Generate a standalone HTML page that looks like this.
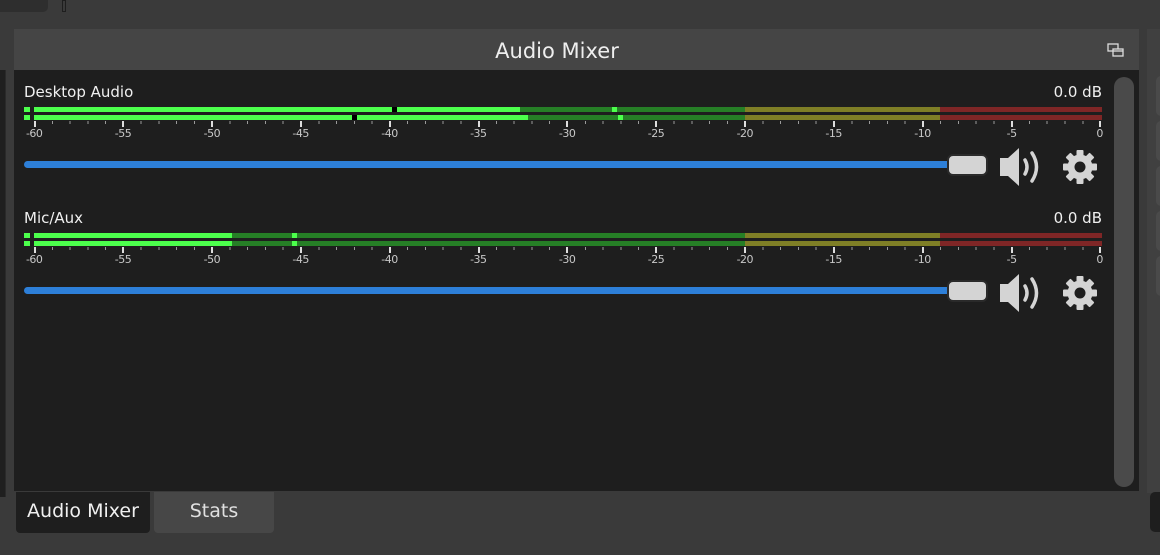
<!DOCTYPE html>
<html><head><meta charset="utf-8"><style>
*{margin:0;padding:0;box-sizing:border-box}
body{width:1160px;height:555px;overflow:hidden;background:#3a3a3a;position:relative;font-family:"DejaVu Sans","Liberation Sans",sans-serif;color:#eee}
.a{position:absolute}
.lbl{font-size:15px;color:#f0f0f0}
.db{font-size:15px;color:#f0f0f0;right:58px}
.bar{position:absolute;height:5px}
.tk{position:absolute;height:3px;left:34px;width:1068px;background:repeating-linear-gradient(to right,#9a9a9a 0 1px,transparent 1px 17.767px)}
.mj{position:absolute;width:2px;height:6px;background:#ddd}
.n{position:absolute;font-size:11px;color:#c8c8c8;transform:translateX(-55%);letter-spacing:-0.5px}
</style></head><body>
<div class="a" style="left:0;top:0;width:48px;height:12px;background:#2e2e2e;border-radius:0 0 5px 0"></div>
<div class="a" style="left:62px;top:0;width:4px;height:12px;border:1px solid #1e1e1e"></div>
<div class="a" style="left:0;top:70px;width:6px;height:427px;background:#1f1f1f;border-right:1px solid #2a2a2a"></div>
<div class="a" style="left:14px;top:29px;width:1125px;height:41px;background:#454545"></div>
<div class="a" style="left:14px;top:39px;width:1086px;text-align:center;font-size:21px;color:#eee">Audio Mixer</div>
<svg class="a" style="left:1107px;top:43px" width="18" height="15" viewBox="0 0 18 15"><rect x="1" y="1" width="10" height="7" fill="#454545" stroke="#ddd" stroke-width="1.3"/><rect x="6" y="6" width="10" height="7" fill="#454545" stroke="#ddd" stroke-width="1.3"/><line x1="6" y1="8" x2="16" y2="8" stroke="#ddd" stroke-width="1.3"/></svg>
<div class="a" style="left:14px;top:70px;width:1125px;height:421px;background:#1e1e1e"></div>
<div class="a" style="left:1114px;top:77px;width:20px;height:410px;background:#4a4a4a;border-radius:10px"></div>
<div class="a" style="left:1147px;top:29px;width:13px;height:464px;background:#404040"></div>
<div class="a" style="left:1156px;top:76px;width:10px;height:40px;background:#4a4a4a;border-radius:5px"></div>
<div class="a" style="left:1156px;top:121px;width:10px;height:40px;background:#4a4a4a;border-radius:5px"></div>
<div class="a" style="left:1156px;top:166px;width:10px;height:40px;background:#4a4a4a;border-radius:5px"></div>
<div class="a" style="left:1156px;top:211px;width:10px;height:40px;background:#4a4a4a;border-radius:5px"></div>
<div class="a" style="left:1156px;top:256px;width:10px;height:40px;background:#4a4a4a;border-radius:5px"></div>
<div class="a" style="left:1150px;top:492px;width:12px;height:40px;background:#1e1e1e;border-radius:5px 0 0 5px"></div>
<div class="a" style="left:16px;top:492px;width:134px;height:41px;background:#1e1e1e;border-radius:0 0 4px 4px;font-size:19px;text-align:center;line-height:38px;color:#f0f0f0">Audio Mixer</div>
<div class="a" style="left:154px;top:492px;width:120px;height:41px;background:#474747;border-radius:0 0 4px 4px;font-size:19px;text-align:center;line-height:38px;color:#e0e0e0">Stats</div>

<div class="a lbl" style="left:24px;top:83px">Desktop Audio</div>
<div class="a db" style="top:83px">0.0 dB</div>
<div id="m1"></div>
<div class="a lbl" style="left:24px;top:209px">Mic/Aux</div>
<div class="a db" style="top:209px">0.0 dB</div>

<script>
function meter(y,ch){
 let h='';
 ch.forEach((c,i)=>{
  let t=y+i*8;
  h+=`<div class="bar" style="left:24px;top:${t}px;width:6px;background:#4cff4c"></div>`;
  h+=`<div class="bar" style="left:34px;top:${t}px;width:${c[0]-34}px;background:#4cff4c"></div>`;
  h+=`<div class="bar" style="left:${c[0]}px;top:${t}px;width:${745-c[0]}px;background:#267f26"></div>`;
  h+=`<div class="bar" style="left:745px;top:${t}px;width:195px;background:#7f7f26"></div>`;
  h+=`<div class="bar" style="left:940px;top:${t}px;width:162px;background:#7f2626"></div>`;
  if(c[1])h+=`<div class="bar" style="left:${c[1]}px;top:${t}px;width:5px;background:#000"></div>`;
  if(c[2])h+=`<div class="bar" style="left:${c[2]}px;top:${t}px;width:5px;background:#4cff4c"></div>`;
 });
 let ty=y+14;
 h+=`<div class="tk" style="top:${ty}px"></div>`;
 for(let k=0;k<=12;k++){
  let x=34+88.83*k; if(k==12)x=1099;
  h+=`<div class="mj" style="left:${x-0.5}px;top:${ty}px"></div>`;
  h+=`<div class="n" style="left:${x+1}px;top:${ty+6}px">${k==12?'0':'-'+(60-5*k)}</div>`;
 }
 return h;
}
function ctrl(y){
 return `<div class="a" style="left:24px;top:${y}px;width:930px;height:7px;background:#2d7fd8;border-radius:4px"></div>
 <div class="a" style="left:947px;top:${y-7}px;width:41px;height:22px;background:#d4d4d4;border:2px solid #2a2a2a;border-radius:6px"></div>
 <svg class="a" style="left:998px;top:${y-14}px" width="48" height="40" viewBox="0 0 48 40"><path d="M2 11H10L21 1V39L10 29H2Z" fill="#d4d4d4"/><path d="M27 13Q31 20 27 27" stroke="#d4d4d4" stroke-width="3.5" fill="none" stroke-linecap="round"/><path d="M34 6Q43 20 34 34" stroke="#d4d4d4" stroke-width="3.5" fill="none" stroke-linecap="round"/></svg>
 <svg class="a" style="left:1062px;top:${y-12}px" width="36" height="36" viewBox="-18 -18 36 36"><g fill="#d4d4d4">${[0,45,90,135,180,225,270,315].map(a=>`<rect x="-3.5" y="-17" width="7" height="8" rx="1" transform="rotate(${a})"/>`).join('')}<circle r="12.5"/></g><circle r="5.5" fill="#1e1e1e"/></svg>`;
}
document.getElementById('m1').outerHTML=
 meter(107,[[520,392,612],[528,352,618]])+ctrl(161)+
 meter(233,[[232,0,292],[232,0,292]])+ctrl(287);
</script>
</body></html>
